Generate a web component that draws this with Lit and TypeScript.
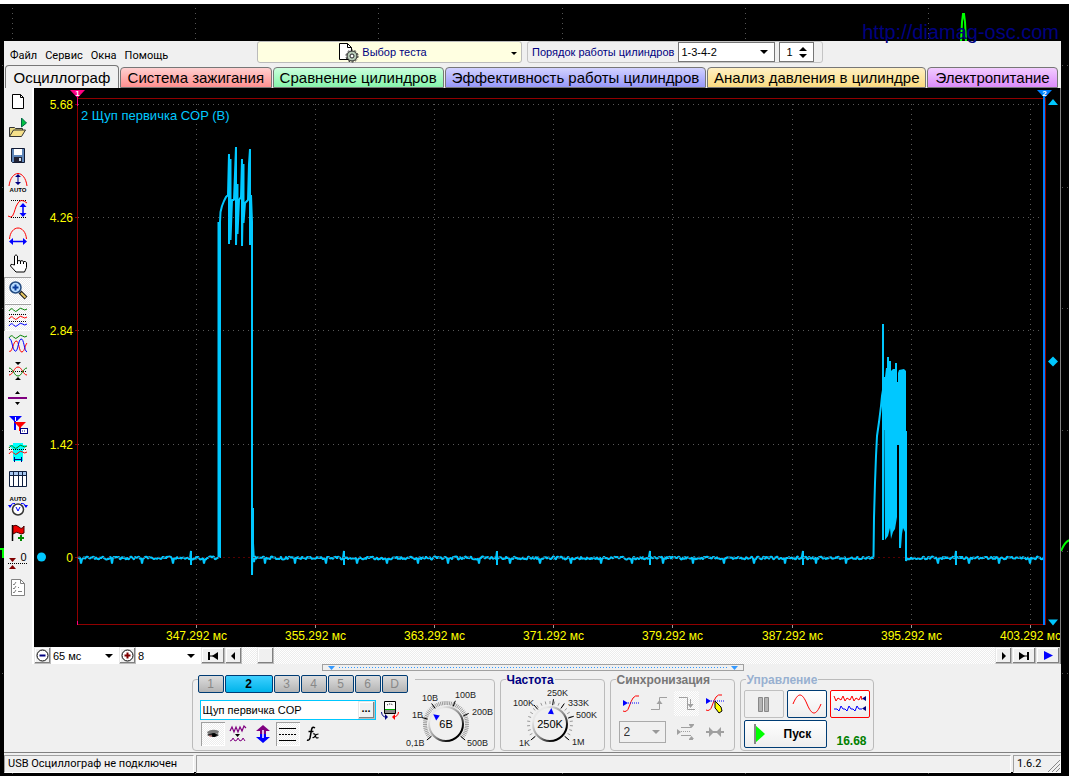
import { LitElement, html, svg, css } from "lit";
import { customElement, state, property } from "lit/decorators.js";
import { classMap } from "lit/directives/class-map.js";

/* ---------- toolbar glyphs, drawn on a 28 x 27 cell ---------- */
const wave = (y: number, c: string) =>
  svg`<path d="M5 ${y + 1}q2.250 -4 4.500 -1t4.500 0t4.500 -1t4.500 0" stroke=${c} fill="none" />`;
const dots = (y: number, x1 = 5, x2 = 23) =>
  svg`<path d="M${x1} ${y}H${x2}" stroke="#000" stroke-dasharray="1 1" shape-rendering="crispEdges" />`;

const toolIcons = [
  { name: "Новый", art: svg`<path d="M8.5 6.5h8l3 3v11h-11z" fill="#fff" stroke="#000"/><path d="M16.5 6.5v3h3" fill="none" stroke="#000"/>` },
  { name: "Открыть", art: svg`<path d="M5.5 21.5v-9h5l1 1h7v2" fill="#e8d880" stroke="#333"/><path d="M5.5 21.5l4-6.500h12l-4 6.500z" fill="#f5e08a" stroke="#333"/><path d="M17.500 12V3l5 5z" fill="#00c040" stroke="#064"/>` },
  { name: "Сохранить", art: svg`<path d="M7.500 6.500h13v14h-12l-1-1z" fill="#5f86b8" stroke="#111a33"/><rect x="10" y="7" width="8" height="6" fill="#fff"/><rect x="10" y="15" width="8" height="5" fill="#223"/><rect x="15" y="16" width="2" height="3" fill="#cde"/>` },
  { name: "Авто усиление", art: svg`<path d="M5 17C6 9 10 4.500 14 4.500S22 9 23 17" fill="none" stroke="#f00"/><path d="M14 6v9" stroke="#000080"/><path d="M11 8l3-3 3 3zM11 13l3 3 3-3z" fill="#000080"/><text x="14" y="23" class="tiny">AUTO</text>` },
  { name: "Вертикаль", art: svg`${dots(4.5, 7, 22)}${dots(21.500, 7, 22)}<path d="M4 20q3 2 4.500 0C11 16 11 11 14 7q3-5 9 0" fill="none" stroke="#f00"/><path d="M19 9v10" stroke="#00f" stroke-width="1.500"/><path d="M15.500 11l3.500-4 3.500 4zM15.500 17l3.500 4 3.500-4z" fill="#00f"/>` },
  { name: "Горизонталь", art: svg`<path d="M5.500 16C6 9 10 5 14 5s8 4 8.500 11" fill="none" stroke="#f00"/><path d="M7 18.500h14" stroke="#00f" stroke-width="1.500"/><path d="M9 15v7l-4-3.500zM19 15v7l4-3.500z" fill="#00f"/>` },
  { name: "Рука", art: svg`<path d="M10.500 15V6q1.500-2.500 3 0v5q1.500-1 3 0 1.500-1 3 .500 2-.500 3 1v5l-2 4.500h-8.500L6.500 16q0-2.500 2-1.500z" fill="#fff" stroke="#000"/><path d="M13.500 11v3M16.500 11v3M19.500 12v2" stroke="#000"/>` },
  { name: "Масштаб", on: true, art: svg`<path d="M16 15l6 6" stroke="#222" stroke-width="4"/><path d="M17 16l4.500 4.500" stroke="#e8c860" stroke-width="2"/><circle cx="11.500" cy="10.500" r="5.500" fill="#b8dcff" stroke="#224a80" stroke-width="1.500"/><path d="M8.500 10.500h6M11.500 7.500v6" stroke="#0a3c9c" stroke-width="2"/>` },
  { name: "Раздельно", on: true, art: svg`${wave(6, "#008000")}${dots(10.5)}${wave(14, "#f00")}${dots(17.5)}${wave(21, "#00f")}` },
  { name: "Вместе", art: svg`${wave(6, "#008000")}<path d="M5 20c3 3 4-9 7-10s3 12 6 11 3-7 5-9" fill="none" stroke="#f00"/><path d="M5 8c3-2 3 10 6 12s3-11 6-12 3 12 6 13" fill="none" stroke="#00f"/>` },
  { name: "Совместить", art: svg`<path d="M11 4h6l-3 3zM11 22h6l-3-3z"/>${dots(13.5)}<path d="M5 17C9 17 10 9 14 9S19 17 23 17" fill="none" stroke="#f00"/><path d="M5 10C9 10 10 18 14 18S19 10 23 10" fill="none" stroke="#008000"/>` },
  { name: "Линия", art: svg`<path d="M11 9h5l-2.500-3zM11 17h5l-2.500 3z"/><path d="M4 13h19" stroke="#800080" stroke-width="2"/>` },
  { name: "Маркеры", art: svg`<path d="M5 4h13l-5 5h-1v9h-2v-9z" fill="#00f"/><path d="M10 10h12l-5 5v4h-2v-4z" fill="#f00"/><path d="M11.500 5v4" stroke="#fff"/><rect x="16.500" y="16.500" width="7" height="5" fill="#fff" stroke="#000080"/><path d="M18 19h4" stroke="#000080" stroke-dasharray="1 1"/>` },
  { name: "Фильтр", art: svg`<path d="M9 4h10v18H9z" fill="#0ff"/><path d="M5 6h18l-4 5H9z" fill="#0ff"/>${wave(8, "#008000")}${dots(10.5)}${wave(14, "#f00")}<path d="M10 20.500h8M10.500 18v5M17.500 18v5" stroke="#000080"/>` },
  { name: "Таблица", art: svg`<path d="M5.500 5.500h17v15h-17z" fill="#fff" stroke="#102040"/><path d="M6 6h16v3H6z" fill="#a8c8f0"/><path d="M6 9.500h16M9.500 6v14M14.500 6v14M18.500 6v14" stroke="#102040"/>` },
  { name: "Авто скорость", art: svg`<text x="14" y="8" class="tiny">AUTO</text><circle cx="14" cy="16.500" r="5.500" fill="#fff" stroke="#333" stroke-width="1.500"/><path d="M12 14l2 4 2-4" fill="none" stroke="#00f"/><path d="M6 14q1-4 5-3.500M22 14q-1-4-5-3.500" fill="none" stroke="#00f"/><path d="M4 12h4l-2 3zM20 12h4l-2 3z" fill="#00f"/>` },
  { name: "Флаг", art: svg`<path d="M8.500 5v16" stroke="#000" stroke-width="1.500"/><path d="M9 6q3-2 6 1t5-1v7q-3 2-5 0t-6 1z" fill="#e00" stroke="#400"/><path d="M17 15v6M14 18h6" stroke="#080" stroke-width="2"/>` },
  { name: "Нуль", art: svg`<text x="19.500" y="14" font-size="11" text-anchor="middle" font-family="Liberation Sans">0</text>${dots(16.5, 4, 23)}<path d="M5 11h7l-3.500 4zM5 22h7l-3.500-4z" fill="#800000"/>` },
  { name: "Отчёт", art: svg`<path d="M7.500 5.500h9l4 4v12h-13z" fill="#fff" stroke="#808080"/><path d="M16.500 5.500v4h4" fill="none" stroke="#808080"/><path d="M9 10l1 1 2-3M9 14l1 1 2-3M9 18l1 1 2-3" fill="none" stroke="#808080"/><path d="M14 13.500h1M14 17.500h4" stroke="#808080"/>` },
] as { name: string; on?: boolean; art: unknown }[];

/* ---------- waveform ---------- */
const W0 = 1026;
const H0 = 559;

// Idle-line noise with the regular ignition cross-talk ticks.
function idle(from: number, to: number): [number, number][] {
  const pts: [number, number][] = [];
  let seed = 7 + from;
  for (let x = from; x <= to; x++) {
    seed = (seed * 1103515245 + 12345) % 2147483648;
    const n = ((seed >> 8) % 100) / 100;
    let y = 470 + (n - 0.5) * 3;
    const minor = (x - 16) % 30.6;
    const major = (x - 4) % 153;
    if (minor < 1) y = 475.5;
    if (major < 1) {
      pts.push([x, 463], [x, 477]);
      y = 470;
    }
    pts.push([x, y]);
  }
  return pts;
}

const burst1: [number, number][] = [
  [184.5, 470], [184.5, 134], [186, 470], [186, 134], [186.5, 124], [188, 118], [190, 113], [192, 109], [194, 107],
  [195, 66], [195, 156], [196.5, 71], [196.5, 152], [198, 112], [200, 112], [202, 59], [202, 157], [203.500, 96], [203.500, 146],
  [205, 112], [207, 109], [208, 71], [208, 158], [209.5, 76], [209.5, 135], [211, 115], [214, 112], [215, 76], [216, 61],
  [216, 157], [217, 107], [218, 134], [218, 487], [219, 420], [219, 455], [220, 474], [221, 468],
];
const rise2: [number, number][] = [
  [839.5, 468], [840, 430], [841, 395], [842, 368], [843, 348], [845, 334], [847, 318], [848, 308], [849, 302], [849, 236], [849, 452], [850, 300],
];
const body2: [number, number][] = [
  [850, 289], [851, 289], [852, 280], [853, 280], [853, 269], [855, 269], [855, 273], [857, 273], [857, 283], [859, 281], [861, 281], [861, 275],
  [863, 275], [863, 294], [864, 294], [864, 285], [865, 282], [870, 281], [872, 283], [872, 343], [873, 343], [873, 445], [871, 444],
  [869, 440], [868, 446], [867, 460], [865, 460], [865, 357], [863, 357], [863, 429], [861, 441], [859, 444], [857, 451], [856, 440],
  [854, 448], [851, 452], [851, 342], [850, 342],
];

@customElement("scope-plot")
export class ScopePlot extends LitElement {
  static styles = css`
    :host { display: block; position: relative; overflow: hidden; background: #000; min-height: 200px; }
    svg { position: absolute; inset: 0; width: 100%; height: 100%; display: block; }
    text { font-family: "Liberation Sans", Arial, sans-serif; font-size: 12px; fill: #ff0; }
    .title { font-size: 13px; fill: #00c8ff; }
    .flag { font-size: 8px; font-weight: bold; fill: #fff; text-anchor: middle; }
    .v { text-anchor: end; }
    .t { text-anchor: middle; }
    .grid { stroke: #585858; stroke-dasharray: 1 4; fill: none; }
    .frame { stroke: #900000; fill: none; }
    .trace { stroke: #00c8ff; stroke-width: 2; fill: none; stroke-linejoin: bevel; }
    .crisp { shape-rendering: crispEdges; }
  `;

  @state() private w = W0;
  @state() private h = H0;
  private watcher?: ResizeObserver;

  connectedCallback() {
    super.connectedCallback();
    this.watcher = new ResizeObserver(() => {
      this.w = this.clientWidth || W0;
      this.h = this.clientHeight || H0;
    });
    this.watcher.observe(this);
  }
  disconnectedCallback() {
    super.disconnectedCallback();
    this.watcher?.disconnect();
  }

  render() {
    const right = this.w - 15;
    const bottom = this.h - 22.5;
    const fx = (x: number) => 43 + ((x - 43) * (right - 43)) / (W0 - 15 - 43);
    const fy = (y: number) => 10.5 + ((y - 10.5) * (bottom - 10.5)) / (H0 - 22.5 - 10.5);
    const line = (p: [number, number][]) => p.map(([x, y]) => `${fx(x).toFixed(1)},${fy(y).toFixed(1)}`).join(" ");
    const snap = (n: number) => Math.floor(n) + 0.5;
    const volts: [string, number][] = [["5.68", 16.5], ["4.26", 129.5], ["2.84", 242.5], ["1.42", 356.5], ["0", 469.5]];
    const times = [347, 355, 363, 371, 379, 387, 395, 403].map((t, i) => [`${t}.292 мс`, 162.5 + i * 119.1] as [string, number]);
    const mid = fy(273.5);
    return html`<svg role="img" aria-label="Осциллограмма">
      <g class="crisp">
        ${volts.slice(0, 4).map(([, y]) => svg`<path class="grid" d="M44 ${snap(fy(y))}H${right}" />`)}
        ${times.map(([, x]) => svg`<path class="grid" d="M${snap(fx(x))} ${fy(16)}V${bottom}" /><path d="M${snap(fx(x))} ${bottom}v3" stroke="#999" />`)}
        ${volts.map(([, y]) => svg`<path class="frame" d="M41 ${snap(fy(y))}h3" />`)}
        <path class="frame" d="M43.5 10.5H${right + 0.5}V${bottom}H43.5z" />
        <path d="M43.5 8V18M43.5 ${bottom - 4}v4" stroke="#ff0080" />
      </g>
      <polyline class="trace" points=${line([...idle(44, 184), ...burst1, ...idle(222, 839), ...rise2])} />
      <polygon points=${line(body2)} fill="#00c8ff" />
      <polyline class="trace" points=${line([[872, 343], [872, 473], [873, 470], ...idle(874, 1010)])} />
      <g class="crisp">
        <path d="M44 ${snap(fy(469.5))}H${right}" stroke="#900000" stroke-opacity=".6" stroke-dasharray="2 3" />
        <path d="M${right - 1} 6V${bottom}" stroke="#0080ff" stroke-width="2" />
      </g>
      <path d="M36 2h15l-7.5 8z" fill="#ff0080" /><text class="flag" x="43.5" y="8">1</text>
      <path d="M${right - 8} 2h15l-7.5 8z" fill="#0080ff" /><text class="flag" x=${right - 0.5} y="8">2</text>
      <g fill="#00c8ff">
        <path d="M${right + 8} 11l5 6h-10z" />
        <path d="M${right + 8} ${mid - 5}l5 5-5 5-5-5z" />
        <path d="M${right + 8} ${bottom + 1}l-5-6h10z" />
        <circle cx="7.5" cy=${fy(469)} r="4.500" />
      </g>
      <text class="title" x="47" y="32">2 Щуп первичка COP (В)</text>
      ${volts.map(([s, y]) => svg`<text class="v" x="39" y=${snap(fy(y)) + 4}>${s}</text>`)}
      ${times.map(([s, x]) => svg`<text class="t" x=${snap(fx(x))} y=${bottom + 15.5}>${s}</text>`)}
    </svg>`;
  }
}

/* ---------- rotary knob ---------- */
type Mark = [string, number, number, string];
@customElement("scope-knob")
export class ScopeKnob extends LitElement {
  static styles = css`
    :host { display: block; position: relative; }
    svg { display: block; }
    text { font-family: "Liberation Sans", Arial, sans-serif; font-size: 9px; fill: #222; }
    .value { font-size: 11px; text-anchor: middle; fill: #000; }
    input { position: absolute; inset: 0; width: 100%; height: 100%; margin: 0; opacity: 0; }
  `;
  @property() label = "";
  @property() value = "";
  @property({ type: Number }) width = 90;
  @property({ type: Number }) cx = 45;
  @property({ type: Number }) angle = 0;
  @property({ type: Boolean }) dense = false;
  @property({ attribute: false }) marks: Mark[] = [];
  @property({ attribute: false }) stops: number[] = [];

  render() {
    const cx = this.cx;
    const cy = 44;
    const ray = (deg: number, a: number, b: number) => {
      const r = (deg * Math.PI) / 180;
      return `M${cx + Math.sin(r) * a} ${cy - Math.cos(r) * a}L${cx + Math.sin(r) * b} ${cy - Math.cos(r) * b}`;
    };
    const n = this.dense ? 54 : 22;
    const ticks = Array.from({ length: n + 1 }, (_, i) => ray(-130 + (260 * i) / n, this.dense ? 19 : 20, 23)).join("");
    const r = (this.angle * Math.PI) / 180;
    return html`<svg width=${this.width} height="70" viewBox="0 0 ${this.width} 70" aria-hidden="true">
        <defs><linearGradient id="rim" x1="0" y1="0" x2="1" y2="1">
          <stop offset="0.2" stop-color="#e8e8e8" /><stop offset="0.55" stop-color="#888" /><stop offset="0.8" stop-color="#000" />
        </linearGradient></defs>
        <path d=${ticks} stroke="#999" />
        <path d=${this.stops.map((s) => ray(s, 19, 25)).join("")} stroke="#000" />
        <circle cx=${cx} cy=${cy} r="17" fill="#f0f0f0" stroke="url(#rim)" stroke-width="2" />
        <path d="M-3 3h6l-3 -6z" fill="#00f" transform="translate(${cx + Math.sin(r) * 13} ${cy - Math.cos(r) * 13}) rotate(${this.angle})" />
        <text class="value" x=${cx} y=${cy + 4}>${this.value}</text>
        ${this.marks.map(([s, x, y, a]) => svg`<text x=${x} y=${y} text-anchor=${a}>${s}</text>`)}
      </svg>
      <input type="range" aria-label=${this.label} min="0" max="6" />`;
  }
}

const voltMarks: Mark[] = [["0,1B", 2, 66, "start"], ["1B", 8, 38, "start"], ["10B", 18, 21, "start"], ["100B", 51, 18, "start"], ["200B", 68, 35, "start"], ["500B", 63, 66, "start"]];
const freqMarks: Mark[] = [["1K", 18, 66, "start"], ["100K", 12, 26, "start"], ["250K", 46, 16, "start"], ["333K", 67, 26, "start"], ["500K", 75, 38, "start"], ["1M", 71, 65, "start"]];

/* ---------- application ---------- */
const pageTabs = [
  ["Осциллограф", "plain"], ["Система зажигания", "red"], ["Сравнение цилиндров", "green"],
  ["Эффективность работы цилиндров", "blue"], ["Анализ давления в цилиндре", "yellow"], ["Электропитание", "violet"],
];

@customElement("app-root")
export class AppRoot extends LitElement {
  static styles = css`
    :host {
      display: block; box-sizing: border-box; min-height: 100vh; padding: 4px 4px 0 0; background: #fff;
      font-family: "Liberation Sans", Arial, sans-serif; font-size: 11px; color: #000;
      --face: #f0f0f0;
      --check: repeating-conic-gradient(#fff 0 25%, #ececec 0 50%) 0 0 / 2px 2px;
    }
    * { box-sizing: border-box; }
    button, select, input { font: inherit; color: inherit; margin: 0; padding: 0; border-radius: 0; outline: none; }
    button { display: flex; align-items: center; justify-content: center; border: 0; background: none; }
    select { appearance: none; border: 0; background: #fff; }
    svg { display: block; flex: none; }
    .desk { position: relative; background: #000; padding: 37px 8px 4px 4px; min-height: calc(100vh - 4px); display: flex; flex-direction: column; overflow: hidden; }
    .backdrop { position: absolute; inset: 0; width: 100%; height: 100%; }
    .mark { position: absolute; right: 10px; top: 17px; font-size: 20px; line-height: 22px; color: #000080; z-index: 2; text-decoration: none; }
    .window { position: relative; flex: 1; display: flex; flex-direction: column; background: var(--face); }

    .top { display: flex; height: 24px; align-items: flex-start; }
    .menu { display: flex; width: 253px; gap: 8px; padding: 6px 0 0 6px; font-family: Roboto, sans-serif; line-height: 18px; }
    .test { width: 265px; height: 22px; background: #ffffe1; border: 1px solid #bbb; border-radius: 3px; color: #000080; gap: 3px; position: relative; padding-right: 14px; }
    .test .caret { position: absolute; right: 4px; top: 10px; }
    .order { display: flex; align-items: center; height: 22px; margin-left: 5px; border: 1px solid #c4c4c4; border-radius: 3px; padding: 0 8px 0 4px; gap: 4px; color: #000080; }
    .order select { width: 97px; height: 20px; border: 1px solid #777; color: #000; padding-left: 2px; }
    .spin { display: flex; align-items: center; width: 35px; height: 20px; border: 1px solid #777; background: #fff; color: #000; }
    .spin input { width: 19px; border: 0; background: none; padding-left: 6px; }
    .spin div { display: flex; flex-direction: column; gap: 3px; }
    .arrow { background: #fff url("data:image/svg+xml,%3Csvg xmlns='http://www.w3.org/2000/svg' width='8' height='4'%3E%3Cpath d='M0 0h8l-4 4z'/%3E%3C/svg%3E") no-repeat right 6px center; }

    .tabs { display: grid; grid-template-columns: 114fr 152fr 171fr 262fr 219fr 131fr; column-gap: 1px; align-items: end; padding: 0 3px 0 1px; height: 23px; }
    .tab { height: 21px; border: 1px solid #777; border-radius: 4px 4px 0 0; font-size: 15px; white-space: nowrap; }
    .plain { height: 23px; background: var(--face); border-bottom: 0; }
    .red { background: linear-gradient(#ffd0d0, #ff9090); }
    .green { background: linear-gradient(#ccffdd, #86f5ac); }
    .blue { background: linear-gradient(#d2d2ff, #9898fa); }
    .yellow { background: linear-gradient(#fff0c4, #fadb80); }
    .violet { background: linear-gradient(#f2ccff, #dc8cfa); }

    .main { flex: 1; display: flex; min-height: 0; }
    .tools { width: 30px; border-right: 2px solid #999; border-image: linear-gradient(90deg, #909090 50%, #fff 50%) 1; display: flex; flex-direction: column; }
    .tool { width: 27px; height: 27px; justify-content: flex-start; }
    .tool .tiny { font: bold 6px "Liberation Sans", sans-serif; text-anchor: middle; }
    .on { background: var(--check); box-shadow: inset 1px 1px #a0a0a0, inset -1px -1px #fff; }
    .view { flex: 1; min-width: 0; display: flex; flex-direction: column; border-right: 1px solid #808080; }
    scope-plot { flex: 1; }
    .scroll { display: flex; height: 17px; background: var(--check); }
    .scroll select { padding-left: 2px; }
    .zt { width: 68px; }
    .zv { width: 65px; }
    .raised { background: var(--face); box-shadow: inset -1px -1px #808080, inset 1px 1px #fff; border: 1px solid #bbb; border-top-color: #e8e8e8; border-left-color: #e8e8e8; height: 17px; }
    .n17 { width: 17px; }
    .n23 { width: 24px; }
    .trough { flex: 1; padding-left: 15px; display: flex; }

    .dock { display: flex; flex-direction: column; align-items: center; height: 88px; }
    .split { width: 422px; height: 7px; border: 1px solid #a0a0a0; display: flex; align-items: center; gap: 4px; padding: 0 5px; }
    .split i { flex: 1; height: 1px; background: repeating-linear-gradient(90deg, #3399ff 0 1px, transparent 1px 3px); }
    .groups { display: flex; gap: 5px; margin-top: 8px; }
    .group { position: relative; height: 72px; margin: 0; padding: 0; border: 1px solid #bbb; border-radius: 4px; min-width: 0; }
    legend { position: absolute; top: -7px; left: 5px; padding: 0 1px; background: var(--face); font-weight: bold; font-size: 12px; line-height: 15px; }
    .g1 { width: 303px; display: flex; }
    .g2 { width: 105px; }
    .g3 { width: 125px; padding: 11px 4px 0 6px; }
    .g4 { width: 134px; padding: 10px 3px 0; display: flex; flex-direction: column; gap: 2px; }
    .navy { color: #000080; }
    .grey { color: #777; }
    .pale { color: #98b0d0; }
    .left { width: 211px; padding-left: 5px; margin-top: -5px; }
    .channels { display: flex; gap: 1px; width: 217px; background: var(--face); position: relative; }
    .ch { width: 26px; height: 18px; border: 1px solid #003c74; border-radius: 2px; background: linear-gradient(#ddd, #b4b4b4); color: #888; font-size: 12px; }
    .sel { width: 48px; background: linear-gradient(#40d0ff, #00b4ea); color: #000; font-weight: bold; }
    .named { display: flex; align-items: center; gap: 4px; margin: 7px 0 2px 2px; width: 200px; }
    .name { display: flex; width: 176px; height: 20px; border: 1px solid #00c8ff; background: #fff; flex: none; }
    .name input { flex: 1; min-width: 0; border: 0; background: none; padding-left: 2px; }
    .more { width: 17px; height: 18px; font-weight: bold; padding-bottom: 4px; }
    .row { display: flex; gap: 1px; padding-left: 3px; }
    .mini { width: 24px; height: 24px; }
    .trig { display: grid; grid-template-columns: 28px 28px 28px 28px; height: 25px; }
    .trig .on { width: 25px; justify-self: center; box-shadow: none; }
    .trig2 { display: flex; margin-top: 5px; align-items: center; gap: 11px; padding-left: 2px; }
    .trig2 select { width: 47px; height: 22px; border: 1px solid #aaa; background-color: var(--face); padding-left: 4px; font-size: 12px; color: #333; }
    .dim { background: var(--face) url("data:image/svg+xml,%3Csvg xmlns='http://www.w3.org/2000/svg' width='8' height='4'%3E%3Cpath fill='%23999' d='M0 0h8l-4 4z'/%3E%3C/svg%3E") no-repeat right 5px center; }
    .pair { display: flex; gap: 3px; }
    .big { width: 40px; height: 28px; border: 1px solid #003c74; border-radius: 2px; background: linear-gradient(#fff, #eee); }
    .off { border-color: #c0c0c0; background: var(--face); }
    .hot { border-color: #f00; }
    .start { width: 83px; font-weight: bold; font-size: 12px; gap: 18px; justify-content: flex-start; padding-left: 9px; }
    .rate { flex: 1; text-align: center; align-self: flex-end; padding-left: 4px; font-weight: bold; font-size: 12px; line-height: 14px; color: #008000; }

    .status { display: grid; grid-template-columns: 190px 1fr 48px; gap: 2px; height: 20px; padding-top: 2px; border-top: 1px solid #808080; font-family: Roboto, sans-serif; line-height: 16px; }
    .cell { border: 1px solid #a0a0a0; border-right-color: #fff; border-bottom-color: #fff; padding-left: 3px; white-space: nowrap; position: relative; }
    .grip { position: absolute; right: 0; bottom: 0; }
  `;

  @state() private channel = "2";
  @state() private tab = "Осциллограф";

  private caret(size = 6, up = false) {
    return html`<svg class="caret" width=${size} height=${size / 2} viewBox="0 0 8 4"><path d=${up ? "M0 4h8l-4-4z" : "M0 0h8l-4 4z"} /></svg>`;
  }

  private backdrop() {
    return html`<svg class="backdrop" aria-hidden="true">
      <g stroke="#555" stroke-dasharray="1 4" shape-rendering="crispEdges">
        ${[0, 1, 2, 3, 4, 5].map((i) => svg`<line x1=${Math.round(12 + i * 183.2) + 0.5} x2=${Math.round(12 + i * 183.2) + 0.5} y1="4" y2="100%" />`)}
        ${[0, 1, 2, 3, 4, 5].map((i) => svg`<line x1="2" x2="100%" y1=${Math.round(61 + i * 121.6) + 0.5} y2=${Math.round(61 + i * 121.6) + 0.5} />`)}
      </g>
      <path d="M961 38l1-20 1-8h1l1 8 1 20" stroke="#0f0" stroke-width="2" fill="none" />
      <path d="M0 545h3v9" stroke="#0f0" stroke-width="2" fill="none" />
      <path d="M1061 547q4-10 9-11" stroke="#0f0" stroke-width="2" fill="none" />
    </svg>`;
  }

  private top() {
    return html`<div class="top">
      <nav class="menu">${["Файл", "Сервис", "Окна", "Помощь"].map((m) => html`<button>${m}</button>`)}</nav>
      <button class="test">
        <svg width="21" height="21" viewBox="0 0 21 21">
          <path d="M1.500 1.500h8l4 4v12h-12z" fill="#fff" stroke="#000" /><path d="M9.500 1.500v4h4" fill="none" stroke="#000" />
          <circle cx="14" cy="14" r="5" fill="#b8ccb8" stroke="#222" /><circle cx="14" cy="14" r="6" fill="none" stroke="#222" stroke-dasharray="2 1.770" />
          <circle cx="14" cy="14" r="2" fill="#fff" stroke="#222" />
        </svg>
        Выбор теста ${this.caret(6)}
      </button>
      <div class="order">
        <label for="order">Порядок работы цилиндров</label>
        <select id="order" class="arrow"><option>1-3-4-2</option></select>
        <div class="spin"><input aria-label="Цилиндр" value="1" /><div>${this.caret(8, true)}${this.caret(8)}</div></div>
      </div>
    </div>`;
  }

  private scrollRow() {
    const zoom = (c: string, d: string) => html`<svg width="15" height="15" viewBox="0 0 15 15"><circle cx="7.500" cy="7.500" r="5.500" fill="#fff" stroke="#000" /><path d=${d} stroke=${c} stroke-width="2" /></svg>`;
    return html`<div class="scroll">
      <button class="raised n17" aria-label="Меньше">${zoom("#000080", "M4.500 7.500h6")}</button>
      <select class="zt arrow" aria-label="Развёртка"><option>65 мс</option></select>
      <button class="raised n17" aria-label="Больше">${zoom("#800000", "M4.500 7.500h6M7.500 4.500v6")}</button>
      <select class="zv arrow" aria-label="Масштаб"><option>8</option></select>
      <button class="raised n23" aria-label="В начало"><svg width="12" height="8"><path d="M1 0h2v8H1zM11 0v8L5 4z" /><path d="M3 4h4" stroke="#000" /></svg></button>
      <button class="raised n17" aria-label="Назад"><svg width="5" height="8"><path d="M4 0v8L0 4z" /></svg></button>
      <div class="trough"><div class="raised n17"></div></div>
      <button class="raised n17" aria-label="Вперёд"><svg width="5" height="8"><path d="M1 0v8l4-4z" /></svg></button>
      <button class="raised n23" aria-label="В конец"><svg width="12" height="8"><path d="M9 0h2v8H9zM1 0v8l6-4z" /><path d="M5 4h4" stroke="#000" /></svg></button>
      <button class="raised n23" aria-label="Воспроизвести"><svg width="9" height="9"><path d="M0 0v9l9-4.500z" fill="#00f" /></svg></button>
    </div>`;
  }

  private channelGroup() {
    return html`<fieldset class="group g1">
      <div class="left">
        <div class="channels">${["1", "2", "3", "4", "5", "6", "D"].map((c) => html`<button class=${classMap({ ch: true, sel: c === this.channel })} @click=${() => (this.channel = c)}>${c}</button>`)}</div>
        <div class="named">
          <div class="name"><input aria-label="Название канала" value="Щуп первичка COP" /><button class="raised more">...</button></div>
          <button aria-label="Поменять вход"><svg width="20" height="20" viewBox="0 0 20 20">
            <path d="M4.500 1.500h11v12h-11z" fill="#fff" stroke="#000" /><path d="M5 9h10v1H5z" fill="#0a0" /><path d="M5 10h10v3H5z" fill="#888" /><path d="M7 5q3-2 6 0" stroke="#000" stroke-dasharray="1 1" fill="none" />
            <path d="M6 17Q2 17 1.500 12" stroke="#000080" fill="none" /><path d="M5 14v6l3-3z" fill="#000080" /><path d="M13 17q5 0 5.500-5" stroke="#f00" fill="none" /><path d="M15 14v6l-3-3z" fill="#f00" />
          </svg></button>
        </div>
        <div class="row">
          <button class="mini on" aria-label="Показать"><svg width="14" height="12" viewBox="0 0 14 12"><path d="M1 4q5-4 12-1l-1 3q-5-2-10 0z" fill="#777" /><path d="M1 7q5-4 12 0-5 4-12 0z" fill="#222" /><circle cx="8" cy="7" r="2" /><path d="M3 8h3" stroke="#e99" /></svg></button>
          <button class="mini" aria-label="Сжать"><svg width="18" height="18" viewBox="0 0 18 18"><path d="M1 6l2-4 2 5 2-5 2 5 2-5 2 4 2-5 2 2" fill="none" stroke="#800080" stroke-width="1.200" /><path d="M6 9h5l-2.500 3z" /><path d="M1 16l2-1 1-2 2 3 2-1 1-2 2 3 2-1 1-2 2 3" fill="none" stroke="#800080" /></svg></button>
          <button class="mini" aria-label="Сдвиг"><svg width="16" height="20" viewBox="0 0 16 20"><path d="M8 1l7 6h-4v3H5V7H1z" fill="#800080" /><path d="M8 19l7-6h-4v-3H5v3H1z" fill="#00f" /><path d="M8 6v8" stroke="#fff" stroke-width="1.500" /></svg></button>
          <button class="mini on" aria-label="Линии"><svg width="17" height="15" shape-rendering="crispEdges"><path d="M0 1.500h17M0 13.500h17" stroke="#000" /><path d="M0 7.500h17" stroke="#000" stroke-dasharray="2 1" /></svg></button>
          <button class="mini" aria-label="Функция"><svg width="14" height="16" viewBox="0 0 14 16"><path d="M9 2Q6 0 5.500 4L4 12q-1 3-3 2M2.500 5.500h5" fill="none" stroke="#000" stroke-width="1.500" /><path d="M7 8q2-1 2.500 2t3 1.500M12.500 8Q10 8 9 10t-2.500 1.500" fill="none" stroke="#000" stroke-width="1.200" /></svg></button>
        </div>
      </div>
      <scope-knob label="Усиление" value="6B" width="90" cx="42" angle="-53" dense .marks=${voltMarks} .stops=${[-130, -75, -35, 22, 65, 130]}></scope-knob>
    </fieldset>`;
  }

  private syncGroup() {
    return html`<fieldset class="group g3"><legend class="grey">Синхронизация</legend>
      <div class="trig">
        <button aria-label="Авто"><svg width="18" height="18" viewBox="0 0 18 18"><path d="M1 16q4 2 6-4t4-9 6-2" fill="none" stroke="#f00" /><path d="M1 5v6l5-3z" fill="#00f" /><path d="M6 8h11" stroke="#00f" stroke-dasharray="1 1" /></svg></button>
        <button aria-label="Фронт"><svg width="18" height="18" viewBox="0 0 18 18"><path d="M1 14.500h8.500v-12H17" fill="none" stroke="#a0a0a0" /><path d="M6.500 9h6l-3-4z" fill="#a0a0a0" /></svg></button>
        <button class="on" aria-label="Спад"><svg width="18" height="18" viewBox="0 0 18 18"><path d="M1 2.500h8.500v12H17M12.500 4v8" fill="none" stroke="#a0a0a0" /><path d="M9.500 9h6l-3 4z" fill="#a0a0a0" /></svg></button>
        <button aria-label="Вручную"><svg width="20" height="20" viewBox="0 0 20 20"><path d="M1 16q4 2 6-4t4-9 6-2" fill="none" stroke="#f00" /><path d="M1 4v6l5-3z" fill="#00f" /><path d="M6 7h13" stroke="#00f" stroke-dasharray="1 1" /><path d="M10 7l6 6 1 4-3 2-3-4-1-1z" fill="#ff0" stroke="#000" /></svg></button>
      </div>
      <div class="trig2">
        <select class="dim" aria-label="Канал синхронизации"><option>2</option></select>
        <svg width="18" height="18" viewBox="0 0 18 18"><path d="M4 4.500h10M4 12.500h10M12 16.500h4M12 1.500h5" stroke="#a0a0a0" /><path d="M0 6v6l4-3zM12 2h5l-2.500 3zM12 16h5l-2.500-3z" fill="#a0a0a0" /><path d="M4 8.500h10" stroke="#a0a0a0" stroke-dasharray="1 1" /></svg>
        <svg width="18" height="10" viewBox="0 0 18 10"><path d="M0 5h18" stroke="#a0a0a0" stroke-width="2" /><path d="M3 0v10l5-5zM15 0v10l-5-5z" fill="#a0a0a0" /></svg>
      </div>
    </fieldset>`;
  }

  private controlGroup() {
    return html`<fieldset class="group g4"><legend class="pale">Управление</legend>
      <div class="pair">
        <button class="big off" aria-label="Пауза"><svg width="12" height="15"><path d="M.500.500h4v14h-4zM6.500.500h4v14h-4z" fill="#b4b4b4" stroke="#888" /></svg></button>
        <button class="big" aria-label="Одиночный"><svg width="30" height="20"><path d="M1 10C6-2 10-2 15 10s9 12 14 0" fill="none" stroke="#f00" /></svg></button>
        <button class="big hot" aria-label="Непрерывный"><svg width="34" height="20" viewBox="0 0 34 20">
          <path d="M1 2l2 5 2-3 3 2 2-4 2 5 2-3 3 2 2-4 2 5 2-3 3 2 2-4 1 4" fill="none" stroke="#f00" />
          <path d="M1 15h3l2 2 2-5 2 3h2l2 2 2-5 2 3h2l2 2 2-5 2 3h3" fill="none" stroke="#00f" />
          <path d="M33 2v5l-4-2.500zM33 12v5l-4-2.500z" fill="#000080" />
        </svg></button>
      </div>
      <div class="pair">
        <button class="big start"><svg width="12" height="20"><path d="M1 1v18L11 10z" fill="#0f0" /><path d="M1 0v20" stroke="#888" stroke-width="2" /></svg>Пуск</button>
        <output class="rate">16.68</output>
      </div>
    </fieldset>`;
  }

  render() {
    return html`<div class="desk">
      ${this.backdrop()}
      <a class="mark" href="http://diamag-osc.com">http://diamag-osc.com</a>
      <div class="window">
        ${this.top()}
        <div class="tabs">${pageTabs.map(([t, c]) => html`<button class="tab ${c}" aria-pressed=${t === this.tab} @click=${() => (this.tab = t)}>${t}</button>`)}</div>
        <div class="main">
          <div class="tools">${toolIcons.map((t) => html`<button class=${classMap({ tool: true, on: !!t.on })} aria-label=${t.name}><svg width="28" height="27" viewBox="0 0 28 27">${t.art}</svg></button>`)}</div>
          <div class="view"><scope-plot></scope-plot>${this.scrollRow()}</div>
        </div>
        <div class="dock">
          <div class="split"><svg width="7" height="4"><path d="M0 0h7L3.500 4z" fill="#39f" /></svg><i></i><svg width="7" height="4"><path d="M0 0h7L3.500 4z" fill="#39f" /></svg></div>
          <div class="groups">
            ${this.channelGroup()}
            <fieldset class="group g2"><legend class="navy">Частота</legend>
              <scope-knob label="Частота" value="250K" width="103" cx="49" angle="5" .marks=${freqMarks} .stops=${[-130, -40, 8, 35, 72, 130]}></scope-knob>
            </fieldset>
            ${this.syncGroup()}${this.controlGroup()}
          </div>
        </div>
        <div class="status">
          <div class="cell">USB Осциллограф не подключен</div><div class="cell"></div>
          <div class="cell">1.6.2<svg class="grip" width="12" height="12"><path d="M0 12L12 0M4 12l8-8M8 12l4-4" stroke="#888" /></svg></div>
        </div>
      </div>
    </div>`;
  }
}
